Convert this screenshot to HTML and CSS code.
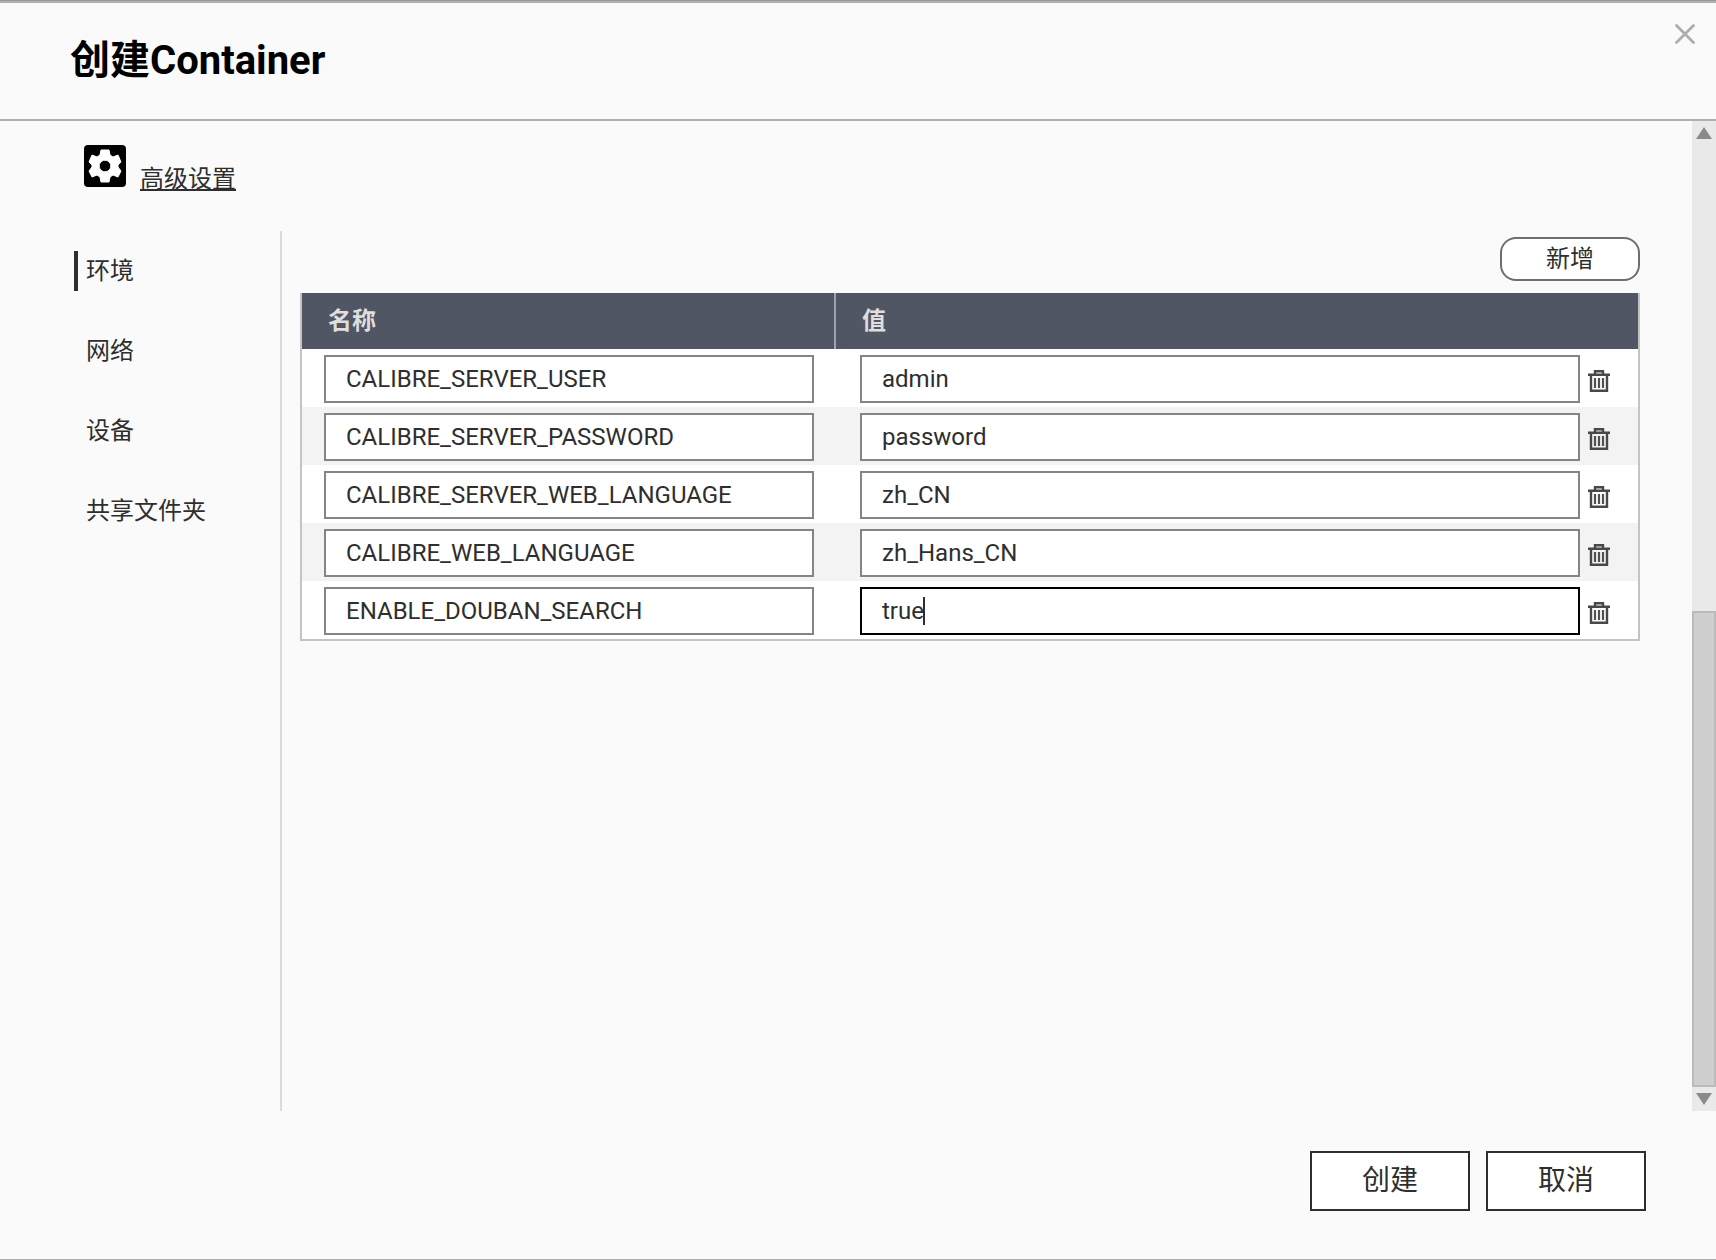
FILE: index.html
```html
<!DOCTYPE html>
<html lang="zh-CN">
<head>
<meta charset="utf-8">
<title>创建Container</title>
<link rel="stylesheet" href="styles.css">
</head>
<body>
<svg class="sprite" aria-hidden="true">
  <symbol id="trash" viewBox="0 0 22 22">
    <path d="M7 4V1.2h8V4M0 4.8h22M3 5v15.8h16V5" fill="none" stroke="#484848" stroke-width="2.4"/>
    <path d="M7 8v10M11 8v10M15 8v10" fill="none" stroke="#505050" stroke-width="2.2"/>
  </symbol>
</svg>
<div class="dialog" role="dialog" aria-labelledby="title">
  <header class="head">
    <h1 class="title" id="title">创建Container</h1>
    <button class="close" type="button" aria-label="关闭">
      <svg width="20" height="20" viewBox="0 0 20 20"><path d="M1.5 1.5l17 17M18.5 1.5l-17 17" stroke="#adadad" stroke-width="2.8" stroke-linecap="round"/></svg>
    </button>
  </header>
  <div class="body">
    <main class="content">
      <div class="advanced">
        <svg width="42" height="42" viewBox="0 0 42 42" aria-hidden="true">
          <rect width="42" height="42" rx="4"/>
          <path fill="#fff" stroke="#fff" stroke-linejoin="round" fill-rule="evenodd" d="M17 5h8l1 5 3 2 5-2 3 7-3 3v2l3 4-3 6-5-2-3 2-1 5h-8l-1-5-3-2-5 2-3-6 3-4v-2l-3-3 3-7 5 2 3-2zM21 15.200a5.800 5.800 0 1 0 .01 0z"/>
        </svg>
        <a class="advanced-link" href="#">高级设置</a>
      </div>
      <div class="panel">
        <nav class="tabs">
          <a class="tab active" href="#" aria-current="page">环境</a>
          <a class="tab" href="#">网络</a>
          <a class="tab" href="#">设备</a>
          <a class="tab" href="#">共享文件夹</a>
        </nav>
        <section class="env">
          <button class="add" type="button">新增</button>
          <table class="vars">
            <thead>
              <tr><th class="col-name" scope="col">名称</th><th scope="col">值</th></tr>
            </thead>
            <tbody>
              <tr>
                <td><input class="field" aria-label="名称" value="CALIBRE_SERVER_USER"></td>
                <td><div class="value"><input class="field" aria-label="值" value="admin"><button class="del" type="button" aria-label="删除"><svg width="22" height="22"><use href="#trash"/></svg></button></div></td>
              </tr>
              <tr>
                <td><input class="field" aria-label="名称" value="CALIBRE_SERVER_PASSWORD"></td>
                <td><div class="value"><input class="field" aria-label="值" value="password"><button class="del" type="button" aria-label="删除"><svg width="22" height="22"><use href="#trash"/></svg></button></div></td>
              </tr>
              <tr>
                <td><input class="field" aria-label="名称" value="CALIBRE_SERVER_WEB_LANGUAGE"></td>
                <td><div class="value"><input class="field" aria-label="值" value="zh_CN"><button class="del" type="button" aria-label="删除"><svg width="22" height="22"><use href="#trash"/></svg></button></div></td>
              </tr>
              <tr>
                <td><input class="field" aria-label="名称" value="CALIBRE_WEB_LANGUAGE"></td>
                <td><div class="value"><input class="field" aria-label="值" value="zh_Hans_CN"><button class="del" type="button" aria-label="删除"><svg width="22" height="22"><use href="#trash"/></svg></button></div></td>
              </tr>
              <tr>
                <td><input class="field" aria-label="名称" value="ENABLE_DOUBAN_SEARCH"></td>
                <td><div class="value"><input class="field editing" aria-label="值" value="true"><span class="caret"></span><button class="del" type="button" aria-label="删除"><svg width="22" height="22"><use href="#trash"/></svg></button></div></td>
              </tr>
            </tbody>
          </table>
        </section>
      </div>
    </main>
    <div class="scrollbar" aria-hidden="true">
      <svg class="arrow" viewBox="0 0 24 24"><path d="M12 6l8 12H4z" fill="#8a8a8a"/></svg>
      <div class="track"><div class="thumb"></div></div>
      <svg class="arrow" viewBox="0 0 24 24"><path d="M12 18L4 6h16z" fill="#8a8a8a"/></svg>
    </div>
  </div>
  <footer class="foot">
    <button class="action" type="button">创建</button>
    <button class="action" type="button">取消</button>
  </footer>
</div>
</body>
</html>
```
FILE: styles.css
```css
* { box-sizing: border-box; }

body {
  display: flex;
  flex-direction: column;
  min-height: 100vh;
  margin: 0;
  padding-top: 1px;
  background: #999;
  color: #2e2e2e;
  font: 24px/40px Roboto, "Noto Sans CJK SC", sans-serif;
}

button, input {
  font: inherit;
  color: inherit;
}

.sprite { display: none; }

.dialog {
  display: flex;
  flex: 1;
  flex-direction: column;
  background: #fafafa;
  border-top: 2px solid #b0b0b0;
  border-bottom: 1px solid #b0b0b0;
}

.head {
  display: flex;
  justify-content: space-between;
  align-items: flex-start;
  padding: 18px 21px 18px 70px;
  border-bottom: 2px solid #b0b0b0;
}

.title {
  margin: 0;
  color: #000;
  font-size: 40px;
  line-height: 80px;
  font-weight: 700;
}

.close {
  display: flex;
  padding: 3px 0 0;
  border: 0;
  background: none;
}

.body {
  display: flex;
  flex: 1;
}

.content {
  display: flex;
  flex-direction: column;
  flex: 1;
  padding: 24px 52px 0 74px;
}

.advanced {
  display: flex;
  gap: 14px;
  height: 86px;
  padding-left: 10px;
}

.advanced-link {
  align-self: flex-start;
  margin-top: 14px;
  color: inherit;
  text-underline-offset: 2px;
  text-decoration-thickness: 2px;
}

.panel {
  display: flex;
  flex: 1;
}

.tabs {
  display: flex;
  flex-direction: column;
  gap: 40px;
  width: 208px;
  padding-top: 20px;
  border-right: 2px solid #dadada;
}

.tab {
  padding-left: 8px;
  border-left: 4px solid transparent;
  color: inherit;
  text-decoration: none;
}

.tab.active { border-left-color: #2e2e2e; }

.env {
  display: flex;
  flex-direction: column;
  flex: 1;
  gap: 12px;
  padding: 6px 0 0 18px;
}

.add {
  align-self: flex-end;
  width: 140px;
  height: 44px;
  padding: 0;
  border: 2px solid #6e6e6e;
  border-radius: 16px;
  background: #fff;
  line-height: 40px;
}

.vars {
  width: 100%;
  table-layout: fixed;
  border-spacing: 0;
  background: #fff;
  border: solid #c4c4c4;
  border-width: 0 2px 2px;
}

.vars th {
  height: 56px;
  padding: 0 26px;
  background: #505663;
  color: #dedede;
  text-align: left;
}

.vars .col-name {
  width: 534px;
  border-right: 2px solid #9ba3b5;
}

.vars td { padding: 6px 22px 4px; }

.vars tbody tr:nth-child(even) { background: #f3f3f3; }

.field {
  display: block;
  width: 100%;
  height: 48px;
  padding: 0 20px;
  border: 2px solid #848484;
  border-radius: 0;
  background: #fff;
}

.vars td + td { padding-right: 28px; padding-left: 24px; }

.field.editing { border-color: #000; }

.value {
  display: flex;
  position: relative;
  align-items: center;
  gap: 8px;
}

.caret {
  position: absolute;
  top: 10px;
  left: 63px;
  width: 2px;
  height: 28px;
  background: #2e2e2e;
}

.del {
  display: flex;
  padding: 4px 0 0;
  border: 0;
  background: none;
}

.scrollbar {
  display: flex;
  flex-direction: column;
  width: 24px;
  background: #e9e9e9;
}

.arrow { height: 24px; }

.track {
  display: flex;
  flex: 1;
  flex-direction: column;
  justify-content: flex-end;
}

.thumb {
  height: 50.5%;
  border: 2px solid #bbb;
  background: #cfcfcf;
}

.foot {
  display: flex;
  justify-content: flex-end;
  gap: 16px;
  padding: 40px 70px 48px;
}

.action {
  width: 160px;
  height: 60px;
  padding: 0;
  border: 2px solid #2e2e2e;
  background: #fff;
  font-size: 28px;
}
```
